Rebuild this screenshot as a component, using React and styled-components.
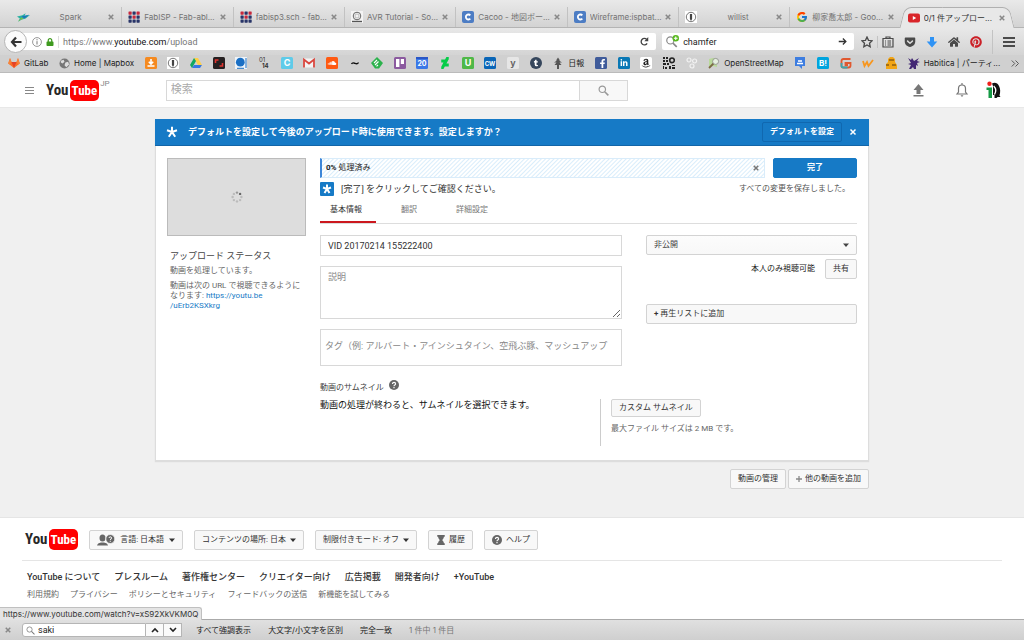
import React from "react";
import styled, { createGlobalStyle, css } from "styled-components";
import { FaGetPocket, FaPinterest, FaSoundcloud, FaAmazon, FaHome, FaTumblr, FaFacebookF, FaDeviantart, FaLinkedinIn, FaLock } from "react-icons/fa";
import { FcGoogle } from "react-icons/fc";

const Global = createGlobalStyle`
  * { box-sizing: border-box; }
  body { margin: 0; background: #f0f0f0; font: 8px/12px Roboto, "Noto Sans CJK JP", sans-serif; color: #555; }
  button, input, select, textarea { font: inherit; color: inherit; margin: 0; }
  button { cursor: pointer; padding: 0; white-space: nowrap; }
  a { color: inherit; text-decoration: none; white-space: nowrap; }
  svg { display: block; flex: none; }
`;

const Page = styled.div`display: flex; flex-direction: column; min-height: 100vh;`;

/* ---------- browser chrome ---------- */
const Chrome = styled.header`font-family: Inter, "Noto Sans CJK JP", sans-serif; color: #222;`;
const TabBar = styled.div`
  display: flex; align-items: flex-end; height: 28px; padding: 0 11px;
  background: linear-gradient(#e9e9e9, #d3d3d3); border-bottom: 1px solid #b4b4b4;
`;
const TabItem = styled.div`
  position: relative; flex: 1 1 0; min-width: 0; display: flex; align-items: center; gap: 4px;
  height: 20px; padding: 0 7px 0 6px; color: ${(p) => (p.$active ? "#333" : "#737373")};
  border-right: 1px solid ${(p) => (p.$active || p.$last ? "transparent" : "#c2c2c2")};
  ${(p) => p.$active && css`
    margin-bottom: -1px; height: 21px; z-index: 0;
    &::before, &::after {
      content: ""; position: absolute; z-index: -1; top: 0; bottom: 0; width: 60%;
      background: #e8e8e8; border: 1px solid #b0b0b0; border-bottom: 0;
    }
    &::before { left: 0; border-right: 0; border-radius: 7px 0 0 0; transform: skewX(-14deg); }
    &::after { right: 0; border-left: 0; border-radius: 0 7px 0 0; transform: skewX(14deg); }
  `}
`;
const TabLabel = styled.span`
  flex: 1; min-width: 0; margin-right: -3px; overflow: hidden; white-space: nowrap; font-size: 8px;
  text-align: ${(p) => (p.$center ? "center" : "left")};
`;
const IconButton = styled.button`
  display: flex; align-items: center; justify-content: center; border: 0; background: none; color: ${(p) => p.$color || "inherit"};
`;
const NavBar = styled.div`
  display: flex; align-items: center; gap: 6px; height: 27px; padding: 0 9px 0 4px;
  background: linear-gradient(#e8e8e8, #d4d4d4);
`;
const BackButton = styled(IconButton)`
  width: 23px; height: 23px; border-radius: 50%; background: #fbfbfb; border: 1px solid #b5b5b5; z-index: 1; flex: none;
  margin-right: -16px;
`;
const Field = styled.form`
  display: flex; align-items: center; gap: 4px; height: 17px; background: #fff; border-radius: 2px; padding: 0 7px 0 ${(p) => p.$inset || 4}px;
  flex: ${(p) => p.$grow || 1} 1 0; min-width: 0; font-family: Roboto, sans-serif;
`;
const Address = styled.label`
  flex: 1; border-left: 1px solid #ddd; padding-left: 4px; color: #777; font-size: 9px;
  b { font-weight: 400; color: #111; }
`;
const BareInput = styled.input`
  flex: 1; min-width: 0; border: 0; outline: 0; background: none; padding: 0; font-size: 9px;
`;
const Tools = styled.div`display: flex; align-items: center; gap: 10px; padding-left: 1px; color: #4a4a4a;`;
const Rule = styled.i`width: 1px; height: ${(p) => p.$h || 12}px; background: #c3c3c3; margin: 0 ${(p) => (p.$wide ? 0 : -6)}px;`;
const Bookmarks = styled.nav`
  display: flex; align-items: center; justify-content: space-between; height: 18px; padding: 0 4px 1px 8px;
  background: #d0d0d0; border-bottom: 1px solid #bbb; font-size: 8px;
`;
const Bookmark = styled.a`display: flex; align-items: center; gap: 4px; color: #222;`;

/* ---------- YouTube masthead ---------- */
const Masthead = styled.div`
  display: flex; align-items: center; height: 35px; padding: 0 20px 0 25px; background: #fff; border-bottom: 1px solid #e8e8e8;
`;
const MastLogo = styled.div`display: flex; align-items: center; margin-left: 12px;`;
const Logo = styled.a`
  display: flex; align-items: center; height: 21px; font: 700 15px/21px "Roboto Condensed", "Liberation Sans Narrow", "Liberation Sans", sans-serif; color: #282828;
`;
const LogoBox = styled.span`
  height: 21px; margin-left: 1px; padding: 0 2px; border-radius: 5px; background: #f00; color: #fff; font-size: 13px;
`;
const Region = styled.sup`align-self: flex-start; margin: -2px 0 0 1px; font: 8px/12px Roboto, sans-serif; color: #888;`;
const SearchForm = styled.form`display: flex; flex: 0 1 462px; height: 21px; margin-left: 56px;`;
const SearchInput = styled.input`
  flex: 1; min-width: 0; border: 1px solid #d8d8d8; padding: 0 4px; font-size: 11px; outline: 0;
  &::placeholder { color: #aaa; }
`;
const SearchButton = styled(IconButton)`width: 48px; border: 1px solid #d8d8d8; border-left: 0; background: #f8f8f8; color: #999;`;
const Account = styled.div`display: flex; align-items: center; margin-left: auto;`;
const AccountButton = styled(IconButton)`width: ${(p) => p.$w}px; color: #777;`;

/* ---------- upload card ---------- */
const Main = styled.main`flex: 1; width: 100%; max-width: 714px; margin: 0 auto; padding: 11px 0 28px;`;
const Card = styled.section`background: #fff; border: 1px solid #ddd; border-top: 0; box-shadow: 0 1px 1px #ddd;`;
const Notice = styled.div`
  display: flex; align-items: center; height: 27px; margin: 0 -1px; padding: 0 10px 0 11px; background: #167ac6; border-bottom: 1px solid #1265a8; color: #fff;
  h1 { flex: 1; margin: 0 0 0 10px; font-size: 9px; font-weight: 700; }
`;
const NoticeButton = styled.button`
  height: 20px; padding: 0 7px; margin-right: 5px; background: #167ac6; border: 1px solid #1068b0; border-radius: 2px; font-weight: 700; color: #fff;
`;
const Columns = styled.div`display: grid; grid-template-columns: 139px minmax(0, 1fr); gap: 14px; padding: 12px 11px 14px;`;
const Thumb = styled.div`
  display: flex; align-items: center; justify-content: center; height: 78px; background: #ddd; border: 1px solid #bbb;
`;
const Status = styled.div`
  padding: 14px 3px 0; color: #666; line-height: 10px;
  h2 { margin: 0 0 4px; font-size: 9px; line-height: 12px; font-weight: 400; color: #444; }
  p { margin: 0 0 5px; }
  a { color: #167ac6; white-space: normal; }
`;
const Split = styled.div`display: flex; align-items: center; gap: 8px;`;
const Progress = styled.div`
  flex: 1; display: flex; align-items: center; justify-content: space-between; height: 20px; padding: 0 5px 0 4px;
  border: 1px solid #d9ecfa; border-left: 2px solid #3d86d8; color: #222;
  background: repeating-linear-gradient(135deg, #fff 0 1px, #d9edfb 2px, #fff 3px);
`;
const Primary = styled.button`width: 84px; height: 20px; border: 1px solid #167ac6; border-radius: 2px; background: #167ac6; color: #fff; font-weight: 700;`;
const Confirm = styled(Split)`
  height: 21px; gap: 7px; font-size: 9px; color: #333;
  small { margin-left: auto; padding-right: 7px; font-size: 8px; color: #555; }
`;
const Tabs = styled.nav`display: flex; gap: 15px; height: 25px; border-bottom: 1px solid #ddd;`;
const SectionTab = styled.a`
  display: flex; align-items: center; height: 24px; padding: 0 14px 0 10px; color: ${(p) => (p.$on ? "#333" : "#777")};
  border-bottom: 2px solid ${(p) => (p.$on ? "#cc181e" : "transparent")};
`;
const FormGrid = styled.div`display: grid; grid-template-columns: minmax(0, 302fr) minmax(0, 211fr); gap: 24px; padding-top: 11px;`;
const Stack = styled.div`display: flex; flex-direction: column; gap: 10px;`;
const fieldLook = css`width: 100%; border: 1px solid #d8d8d8; background: #fff; outline: 0; display: block; &::placeholder { color: #888; opacity: 1; }`;
const TitleInput = styled.input`${fieldLook} height: 21px; padding: 0 7px; font-size: 9px; color: #333;`;
const Description = styled.textarea`${fieldLook} height: 53px; padding: 4px 7px; font-size: 9px; line-height: 12px; resize: vertical;`;
const TagsInput = styled.input`${fieldLook} height: 37px; padding: 0 11px 4px 4px; font-size: 9px;`;
const SelectWrap = styled.div`
  position: relative; color: #444;
  svg { position: absolute; right: 8px; top: 7px; pointer-events: none; }
`;
const Select = styled.select`
  appearance: none; width: 100%; height: 20px; padding: 0 7px; border: 1px solid #d3d3d3; border-radius: 2px;
  background: linear-gradient(#fcfcfc, #f8f8f8);
`;
const Button = styled.button`
  display: inline-flex; align-items: center; gap: ${(p) => p.$gap || 4}px; height: ${(p) => p.$h || 20}px; padding: 0 7px;
  border: 1px solid #d3d3d3; border-radius: 2px; background: #f8f8f8; color: #333;
`;
const PlaylistButton = styled(Button)`width: 100%; gap: 2px;`;
const Share = styled.div`display: flex; align-items: center; justify-content: flex-end; gap: 10px; margin: 4px 0 25px; color: #222;`;
const ThumbRow = styled.div`display: grid; grid-template-columns: 280px minmax(0, 1fr); color: #222;`;
const ThumbTitle = styled.h3`
  display: flex; gap: 5px; margin: 14px 0 4px; font-size: 8px; line-height: 14px; font-weight: 400; color: #444;
  span { padding-top: 1px; }
`;
const ThumbNote = styled.p`margin: 0; font-size: 9px; color: #111;`;
const ThumbUpload = styled.div`
  min-height: 47px; border-left: 1px solid #ccc; padding-left: 10px; color: #666;
  p { margin: 6px 0 0; }
`;
const CardActions = styled.div`display: flex; justify-content: flex-end; gap: 2px; padding-top: 8px;`;

/* ---------- footer ---------- */
const Footer = styled.footer`min-height: 102px; padding: 11px 22px 0; background: #fff; border-top: 1px solid #e5e5e5;`;
const FooterTop = styled.div`display: flex; align-items: center; gap: 11px; padding: 0 0 10px 3px; border-bottom: 1px solid #e5e5e5;`;
const Links = styled.nav`
  display: flex; gap: ${(p) => (p.$small ? 11 : 14)}px; padding: ${(p) => (p.$small ? 6 : 10)}px 5px 0; font-size: ${(p) => (p.$small ? 8 : 9)}px; color: ${(p) => (p.$small ? "#666" : "#333")};
  font-weight: ${(p) => (p.$small ? 400 : 500)};
`;
const FindBar = styled.form`
  position: relative; display: flex; align-items: center; height: 21px; padding: 0 5px; color: #222;
  background: linear-gradient(#e0e0e0, #cfcfcf); border-top: 1px solid #aaa; font-family: Inter, "Noto Sans CJK JP", sans-serif;
`;
const StatusTip = styled.div`
  position: absolute; left: 0; bottom: 100%; padding: 0 3px; height: 13px; font-size: 8px; line-height: 12px; color: #333;
  background: #e4e4e4; border: 1px solid #c0c0c0; border-left: 0; border-bottom: 0; border-radius: 0 3px 0 0;
`;
const FindBox = styled.label`
  display: flex; align-items: center; gap: 3px; width: 124px; height: 14px; margin-left: 11px; padding: 0 3px; background: #fff; border: 1px solid #b5b5b5; border-radius: 3px 0 0 3px;
  font-family: Roboto, sans-serif; color: #222;
  svg { color: #777; }
`;
const FindStep = styled(IconButton)`width: 18px; height: 14px; background: #fafafa; border: 1px solid #b5b5b5; border-left: 0;`;
const FindOptions = styled.div`
  display: flex; gap: 17px; margin-left: 14px;
  button { border: 0; background: none; }
  output { color: #777; }
`;

/* ---------- icons ---------- */
const Svg = ({ s = 12, children, v = 12, ...p }) => (
  <svg width={s} height={s} viewBox={`0 0 ${v} ${v}`} fill="none" aria-hidden="true" {...p}>{children}</svg>
);
const Cross = ({ s = 6, w = 2 }) => <Svg s={s} v={8}><path d="M1 1l6 6M7 1L1 7" stroke="currentColor" strokeWidth={w} /></Svg>;
const Caret = () => <Svg s={6} v={6}><path d="M0 1.500h6L3 5z" fill="currentColor" /></Svg>;
const Lens = ({ s = 10, w = 1.3 }) => <Svg s={s}><circle cx="4.7" cy="4.7" r="3.5" stroke="currentColor" strokeWidth={w} /><path d="M7.3 7.3l4 4" stroke="currentColor" strokeWidth={w + 0.4} /></Svg>;
const Help = ({ s = 10 }) => <Svg s={s}><circle cx="6" cy="6" r="6" fill="#666" /><path d="M4.2 4.7c0-2.4 3.7-2.3 3.7 0 0 1.4-1.9 1.3-1.9 2.7M6 8.4v1.4" stroke="#fff" strokeWidth="1.4" /></Svg>;
const Star6 = ({ s = 12 }) => <Svg s={s}><path d="M6 6V.8M6 6L1 4.3M6 6l5-1.7M6 6l-3.2 4.8M6 6l3.2 4.8" stroke="#fff" strokeWidth="2" /></Svg>;
const Box = ({ bg, fg = "#fff", children, t, size = 9, r = 1.5 }) => (
  <Svg><rect width="12" height="12" rx={r} fill={bg} />{children}{t && <text x="6" y="9" fontSize={size} fontWeight="700" textAnchor="middle" fill={fg} fontFamily="Inter, sans-serif">{t}</text>}</Svg>
);
const Grid = () => (
  <Svg>{[0, 1, 2].map((y) => [0, 1, 2].map((x) => <rect key={`${x}${y}`} x={x * 4 + 0.5} y={y * 4 + 0.5} width="3.2" height="3.2" rx=".6" fill={x + y === 2 && x !== 0 ? "#c8283c" : x === 0 && y === 0 ? "#c8283c" : "#283468"} />))}</Svg>
);
const Spark = () => <Svg s={13}><path d="M0 5l5-1 3-2-1 2.6 5-1-4 3.4-4 1-3 2 1.6-3z" fill="#2bb1a3" /><path d="M4 5l7-1.6L7 7z" fill="#1b75bc" /><path d="M1 9.6L4 6l2 .6z" fill="#7ac043" /></Svg>;
const Pen = () => <Svg><rect width="12" height="12" fill="#fff" /><circle cx="6" cy="6" r="4.7" stroke="#555" strokeWidth=".8" /><path d="M4.9 3h2.2v5L6 10 4.9 8z" fill="#444" /></Svg>;
const SparkFun = () => <Svg><rect width="12" height="12" fill="#f4f4f4" /><circle cx="6" cy="5" r="3.8" stroke="#666" /><circle cx="6" cy="5" r="2" stroke="#999" strokeWidth=".6" /><path d="M1 10.5h10" stroke="#555" strokeWidth="1.4" /></Svg>;
const Cacoo = () => <Box bg="#4d7dc4" r={2}><path d="M8.3 4.4A2.5 2.5 0 1 0 8.3 7.6" stroke="#fff" strokeWidth="1.8" /></Box>;
const YTPlay = () => <Svg><rect y="1.5" width="12" height="9" rx="2" fill="#d9252a" /><path d="M4.8 4v4L8.2 6z" fill="#fff" /></Svg>;
const Globe = () => <Svg s={11}><circle cx="6" cy="6" r="5.5" fill="#777" /><path d="M2 3l3-1 1 2-2 2-2-1zM7 5l3-1 1 3-3 3-2-2z" fill="#ddd" /></Svg>;
const GitLab = () => <Svg><path d="M2 1l1.500 4h5L10 1l1.800 5.500L6 11 .2 6.500z" fill="#fc6d26" /><path d="M3.500 5h5L6 11z" fill="#e24329" /><path d="M2 1L.2 6.500 1.500 7.500 3.500 5zM10 1l1.800 5.500-1.300 1L8.500 5z" fill="#f5853a" /></Svg>;

const marks = [
  [<Box bg="#f58a20"><path d="M6 2v4M3.8 4.8L6 7l2.2-2.2M2.5 9h7" stroke="#fff" strokeWidth="1.6" /></Box>, "ダウンロード"],
  [<Pen />, "Pen"],
  [<Svg><path d="M4 1h4l4 7H8z" fill="#ffcf48" /><path d="M4 1L0 8l2 3 4-7z" fill="#11a861" /><path d="M4 8h8l-2 3H2z" fill="#3777e3" /></Svg>, "Drive"],
  [<Box bg="#252021"><path d="M2.5 6V3h3M9.5 6v3h-3" stroke="#e0342f" strokeWidth="1.6" /></Box>, "Frame"],
  [<Svg><rect width="12" height="12" fill="#eef4fa" /><circle cx="5.3" cy="5.2" r="4.4" fill="#1a6fc4" /><path d="M2 11.3h7M11 1v10" stroke="#1a6fc4" /></Svg>, "Q"],
  [<Svg><g fill="#333" fontSize="6" fontFamily="Inter, sans-serif"><text x="1" y="5">01</text><text x="4" y="11" fontWeight="700">14</text></g></Svg>, "0114"],
  [<Box bg="#5fcbe9" t="C" />, "C"],
  [<Svg><rect y="1.5" width="12" height="9" rx="1" fill="#f3f3f3" /><path d="M1 10.5V2.5l5 4 5-4v8" stroke="#d9453d" strokeWidth="1.8" /></Svg>, "Gmail"],
  [<Box bg="#ff5a12"><FaSoundcloud x="1.5" y="1.5" size={9} color="#fff" /></Box>, "SoundCloud"],
  [<Svg><path d="M2.500 7c1-2 2.500-1 3.500-.6S8.500 7.400 9.500 5.500" stroke="#111" strokeWidth="1.400" /></Svg>, "Tilde"],
  [<Svg><path d="M6 0l6 6-4 5.400H4L0 6z" fill="#2bb24c" /><path d="M3 6l3-3M4 8l3.500-3.500M5.500 9.300L7 8" stroke="#fff" strokeWidth="1.1" /></Svg>, "Feedly"],
  [<Box bg="#8b5a9f"><path d="M2 2h3.400v8H2zM6.800 2H10v5H6.800z" fill="#fff" /></Box>, "Trello"],
  [<Box bg="#3b78e7" t="20" size={7}><path d="M0 0h12v2H0z" fill="#2a56c6" /></Box>, "Calendar"],
  [<FaDeviantart size={12} color="#05cc47" />, "DeviantArt"],
  [<Box bg="#4fb848" t="U" />, "U"],
  [<Box bg="#0a66b7" t="CW" size={6} />, "CW"],
  [<Box bg="#e6e6e6" fg="#666" t="y" />, "y"],
  [<Svg><circle cx="6" cy="6" r="6" fill="#35465c" /><FaTumblr x="2.500" y="2.500" size={7} color="#fff" /></Svg>, "Tumblr"],
  [<Svg><path d="M6 .5l2 3H7l3 2H7.500L9.500 8H7v4H5V8H2.500l2-2.500H2l3-2H4z" fill="#555" /></Svg>, "日報", true],
  [<Box bg="#3f5b9a"><FaFacebookF x="3" y="2" size={9} color="#fff" /></Box>, "Facebook"],
  [<Box bg="#0a78b5"><FaLinkedinIn x="2" y="2" size={8} color="#fff" /></Box>, "LinkedIn"],
  [<Box bg="#fff"><FaAmazon x="1" y="1" size={10} color="#222" /></Box>, "Amazon"],
  [<Svg><path d="M0 0h2v2H0zM3 0h2v2H3zM0 3h2v2H0zM3 3h2v2H3zM0 6h3v2H0zM4 6h2v2H4zM0 9h1v3H0zM2 10h2v2H2zM6 9h2v3H6zM9 8h3v1H9zM9 10h3v2H9z" fill="#222" /><circle cx="9" cy="3.300" r="2.300" stroke="#222" strokeWidth="1.600" /></Svg>, "QR"],
  [<Svg stroke="#f2f2f2" strokeWidth="1.200"><circle cx="3" cy="3" r="2" /><circle cx="8.600" cy="4" r="2" /><circle cx="6" cy="9" r="2" /></Svg>, "Rings"],
  [<Svg><path d="M1 2l4-1 4 1v8l-4-1-4 1z" fill="#b9d99a" /><path d="M1 11l5-5" stroke="#7c6a45" strokeWidth="1.800" /><circle cx="7.600" cy="4.400" r="3" fill="#e6efe0" stroke="#888" strokeWidth=".8" /></Svg>, "OpenStreetMap", true],
  [<Svg><path d="M1 0h10v9H8v3L5 9H1z" fill="#3d7de0" /><path d="M3 6.500h6M4 4h4" stroke="#fff" strokeWidth="1.300" /></Svg>, "Translate"],
  [<Box bg="#00a4de" t="B!" size={8} />, "B!"],
  [<Svg><path d="M10.500 2H3.500Q1.500 2 1.500 4v5q0 1.500 2 1.500h5q2 0 2-2V6H5.500v2H8" stroke="#e0582f" strokeWidth="1.800" /><path d="M1.500 6v3q0 1.500 2 1.500h4" stroke="#3aa6b0" strokeWidth="1.800" /></Svg>, "G"],
  [<Svg><path d="M1 4l1.500 5L5 5l1.500 4L11 3" stroke="#f7961e" strokeWidth="1.800" /></Svg>, "w"],
  [<Svg><path d="M1 12V7l2-2V2l2-2h3l2 2v3l2 3v4z" fill="#f2a516" /><path d="M4 3h5M1 8h3M7 8h4" stroke="#5a3a10" strokeWidth="1.200" /></Svg>, "Character"],
  [<Svg><path d="M0 1l3 2 1-2 2 3 5-3-2 3 3 1-3 1 1 3-2-1v4H6l-1-2-2 2H1l2-4-3-1 3-1z" fill="#432874" /></Svg>, "Habitica | パーティ...", true],
];

const tabs = [
  [<Spark />, "Spark", true],
  [<Grid />, "FabISP - Fab-abl..."],
  [<Grid />, "fabisp3.sch - fab..."],
  [<SparkFun />, "AVR Tutorial - So..."],
  [<Cacoo />, "Cacoo - 地図ボー..."],
  [<Cacoo />, "Wireframe:ispbat..."],
  [<Pen />, "willist", true],
  [<FcGoogle size={12} />, "柳家喬太郎 - Goo..."],
  [<YTPlay />, "0/1 件アップロー..."],
];

const YouTubeLogo = () => <Logo href="#" aria-label="YouTube">You<LogoBox>Tube</LogoBox></Logo>;

function BrowserChrome() {
  return (
    <Chrome>
      <TabBar>
        {tabs.map(([icon, name, center], i) => (
          <TabItem key={i} $active={i === 8} $last={i === 7}>
            {icon}<TabLabel $center={center}>{name}</TabLabel>
            <IconButton aria-label="タブを閉じる" $color="#888"><Cross /></IconButton>
          </TabItem>
        ))}
      </TabBar>
      <NavBar>
        <BackButton aria-label="戻る" $color="#333"><Svg><path d="M6 1.500L2 6l4 4.500M2 6h9.500" stroke="currentColor" strokeWidth="2.200" /></Svg></BackButton>
        <Field $inset={15} $grow={645} onSubmit={(e) => e.preventDefault()}>
          <Svg s={10}><circle cx="6" cy="6" r="5.300" stroke="#777" strokeWidth=".9" /><path d="M6 5v4M6 2.600V4" stroke="#777" strokeWidth="1.200" /></Svg>
          <FaLock size={8} color="#3f9a1f" />
          <Address>https://www.<b>youtube.com</b>/upload</Address>
          <IconButton aria-label="再読み込み" $color="#444"><Svg s={9}><path d="M9.500 8.500A4.300 4.300 0 1 1 9 3.300" stroke="currentColor" strokeWidth="1.800" /><path d="M11 0v5.500H5.800z" fill="currentColor" /></Svg></IconButton>
        </Field>
        <Field $grow={189}>
          <Svg s={13}><circle cx="4" cy="5" r="3.300" stroke="#888" strokeWidth="1.100" /><path d="M6.400 7.500l3.500 3.500" stroke="#888" strokeWidth="1.500" /><circle cx="9" cy="3" r="3" fill="#58b91e" /><path d="M9 1.300v3.400M7.300 3h3.400" stroke="#fff" /></Svg>
          <BareInput aria-label="検索" defaultValue="chamfer" />
          <IconButton aria-label="検索する"><Svg s={9}><path d="M1 6h9M6.500 2l4 4-4 4" stroke="#333" strokeWidth="1.700" /></Svg></IconButton>
        </Field>
        <Tools>
          <IconButton aria-label="ブックマーク"><Svg><path d="M6 1l1.500 3.300 3.700.4-2.700 2.500.7 3.600L6 9l-3.200 1.800.7-3.600L.8 4.700l3.700-.4z" stroke="currentColor" strokeWidth="1.300" /></Svg></IconButton>
          <Rule />
          <IconButton aria-label="一覧"><Svg><path d="M1 2.500h10v8.500H1zM4 2.500v-1.500h4v1.500M3 5h1M5.500 5H9M3 7h1M5.500 7H9M3 9h1M5.500 9H9" stroke="currentColor" strokeWidth="1.200" /></Svg></IconButton>
          <IconButton aria-label="Pocket"><FaGetPocket size={12} /></IconButton>
          <IconButton aria-label="ダウンロード" $color="#2f93f5"><Svg><path d="M4 1h4v4.500h3.300L6 11.500.7 5.500H4z" fill="currentColor" /></Svg></IconButton>
          <IconButton aria-label="ホーム"><FaHome size={12} /></IconButton>
          <IconButton aria-label="Pinterest" $color="#cb2027"><FaPinterest size={12} /></IconButton>
          <Rule $h={24} $wide />
          <IconButton aria-label="メニュー"><Svg><path d="M0 2h12M0 6h12M0 10h12" stroke="currentColor" strokeWidth="2" /></Svg></IconButton>
        </Tools>
      </NavBar>
      <Bookmarks>
        <Bookmark href="#"><GitLab />GitLab</Bookmark>
        <Bookmark href="#"><Globe />Home | Mapbox</Bookmark>
        {marks.map(([icon, name, show]) => <Bookmark key={name} href="#" aria-label={name}>{icon}{show && name}</Bookmark>)}
        <IconButton aria-label="その他"><Svg s={9}><path d="M1 2l4 4-4 4M6 2l4 4-4 4" stroke="#555" strokeWidth="1.300" /></Svg></IconButton>
      </Bookmarks>
    </Chrome>
  );
}

const Spinner = () => (
  <Svg>{[...Array(8)].map((_, i) => <circle key={i} cx={6 + 4.4 * Math.cos(i * 0.785)} cy={6 + 4.4 * Math.sin(i * 0.785)} r="1.200" fill={i === 7 ? "#666" : i === 6 ? "#999" : "#bbb"} />)}</Svg>
);

export default function App() {
  return (
    <Page lang="ja">
      <Global />
      <BrowserChrome />
      <Masthead>
        <IconButton aria-label="ガイド" $color="#888"><Svg s={9} v={9}><path d="M0 1.500h9M0 4.500h9M0 7.500h9" stroke="currentColor" /></Svg></IconButton>
        <MastLogo><YouTubeLogo /><Region>JP</Region></MastLogo>
        <SearchForm onSubmit={(e) => e.preventDefault()}>
          <SearchInput aria-label="検索" placeholder="検索" />
          <SearchButton aria-label="検索する"><Lens s={11} /></SearchButton>
        </SearchForm>
        <Account>
          <AccountButton $w={43} aria-label="アップロード"><Svg s={27} v={27}><path d="M13.500 7l5 6h-3v4h-4v-4h-3zM8.500 18h10v1.500h-10z" fill="currentColor" /></Svg></AccountButton>
          <AccountButton $w={43} aria-label="通知"><Svg s={14} v={14}><path d="M2 11h10L10.500 9V5.500a3.500 3.500 0 0 0-7 0V9zM7 1.500V0" stroke="currentColor" strokeWidth="1.200" /><path d="M5.500 12.300h3L7 14z" fill="currentColor" /></Svg></AccountButton>
          <AccountButton $w={21} aria-label="アカウント">
            <Svg s={18} v={18}><path d="M7 2.500c3-1.500 5.500-.5 7 2.500 1.500 3 1.500 6 .5 9.500l1 1.500h-3l-1 1H9.500V14H8V5z" fill="#111" /><path d="M1.500 6.500H7V17H3.500V9h-2z" fill="#159a45" /><path d="M8.700 5c2.500 2.500 2.300 6 .8 8.500" stroke="#fff" strokeWidth="1.300" /><circle cx="4.500" cy="2.800" r="2.200" fill="#f0201c" /></Svg>
          </AccountButton>
        </Account>
      </Masthead>

      <Main>
        <Card>
          <Notice>
            <Star6 />
            <h1>デフォルトを設定して今後のアップロード時に使用できます。設定しますか？</h1>
            <NoticeButton>デフォルトを設定</NoticeButton>
            <IconButton aria-label="閉じる"><Svg s={12}><path d="M3.500 3.500l5 5M8.500 3.500l-5 5" stroke="#fff" strokeWidth="1.500" /></Svg></IconButton>
          </Notice>
          <Columns>
            <aside>
              <Thumb><Spinner /></Thumb>
              <Status>
                <h2>アップロード ステータス</h2>
                <p>動画を処理しています。</p>
                <p>動画は次の URL で視聴できるようになります: <a href="#">https://youtu.be<wbr />/uErb2KSXkrg</a></p>
              </Status>
            </aside>
            <div>
              <Split>
                <Progress><span><b>0%</b> 処理済み</span><IconButton aria-label="キャンセル" $color="#777"><Cross s={6} /></IconButton></Progress>
                <Primary>完了</Primary>
              </Split>
              <Confirm>
                <Svg s={14} v={14}><rect width="14" height="14" rx="1" fill="#167ac6" /><path d="M7 7V2.500M7 7L3 5.500M7 7l4-1.500M7 7l-2.500 4M7 7l2.500 4" stroke="#fff" strokeWidth="2" /></Svg>
                <span>[完了] をクリックしてご確認ください。</span>
                <small>すべての変更を保存しました。</small>
              </Confirm>
              <Tabs>
                <SectionTab href="#" $on>基本情報</SectionTab>
                <SectionTab href="#">翻訳</SectionTab>
                <SectionTab href="#">詳細設定</SectionTab>
              </Tabs>
              <FormGrid>
                <Stack>
                  <TitleInput aria-label="タイトル" defaultValue="VID 20170214 155222400" />
                  <Description aria-label="説明" placeholder="説明" />
                  <TagsInput aria-label="タグ" placeholder="タグ（例: アルバート・アインシュタイン、空飛ぶ豚、マッシュアップ" />
                </Stack>
                <div>
                  <SelectWrap>
                    <Select aria-label="公開設定"><option>非公開</option></Select><Caret />
                  </SelectWrap>
                  <Share>本人のみ視聴可能<Button>共有</Button></Share>
                  <PlaylistButton><b>+</b>再生リストに追加</PlaylistButton>
                </div>
              </FormGrid>
              <ThumbTitle><span>動画のサムネイル</span><Help /></ThumbTitle>
              <ThumbRow>
                <ThumbNote>動画の処理が終わると、サムネイルを選択できます。</ThumbNote>
                <ThumbUpload>
                  <Button $h={18}>カスタム サムネイル</Button>
                  <p>最大ファイル サイズは 2 MB です。</p>
                </ThumbUpload>
              </ThumbRow>
            </div>
          </Columns>
        </Card>
        <CardActions>
          <Button>動画の管理</Button>
          <Button $gap={3}><Svg s={6} v={7}><path d="M3.500 0v7M0 3.500h7" stroke="#888" strokeWidth="1.500" /></Svg>他の動画を追加</Button>
        </CardActions>
      </Main>

      <Footer>
        <FooterTop>
          <YouTubeLogo />
          <Button $gap={5}>
            <svg width="18" height="12" viewBox="0 0 18 12" fill="none" aria-hidden="true"><ellipse cx="5.500" cy="4" rx="3" ry="3.500" fill="#666" /><path d="M0 11.500q.5-2.500 4-3h3q3.500.5 4 3z" fill="#666" /><circle cx="13.300" cy="5" r="4.500" fill="#666" stroke="#f8f8f8" strokeWidth=".8" /><path d="M12 4c0-1.600 2.600-1.500 2.600 0 0 1-1.300 1-1.300 2M13.300 6.800v1" stroke="#fff" strokeWidth="1" /></svg>
            <span>言語: 日本語</span><Caret />
          </Button>
          <Button><span>コンテンツの場所: 日本</span><Caret /></Button>
          <Button><span>制限付きモード: オフ</span><Caret /></Button>
          <Button $gap={3}><Svg s={10}><path d="M1.500 0h9v2h-1c0 2-1.500 3-2 4 .5 1 2 2 2 4h1v2h-9v-2h1c0-2 1.500-3 2-4-.5-1-2-2-2-4h-1z" fill="#666" /></Svg>履歴</Button>
          <Button><Help />ヘルプ</Button>
        </FooterTop>
        <Links>
          {["YouTube について", "プレスルーム", "著作権センター", "クリエイター向け", "広告掲載", "開発者向け", "+YouTube"].map((t) => <a href="#" key={t}>{t}</a>)}
        </Links>
        <Links $small>
          {["利用規約", "プライバシー", "ポリシーとセキュリティ", "フィードバックの送信", "新機能を試してみる"].map((t) => <a href="#" key={t}>{t}</a>)}
        </Links>
      </Footer>
      <FindBar onSubmit={(e) => e.preventDefault()}>
        <StatusTip>https://www.youtube.com/watch?v=xS92XkVKM0Q</StatusTip>
        <IconButton type="button" aria-label="検索バーを閉じる" $color="#888"><Cross /></IconButton>
        <FindBox><Lens s={9} w={1} /><BareInput aria-label="ページ内検索" defaultValue="saki" /></FindBox>
        <FindStep type="button" aria-label="前を検索"><Svg s={8} v={8}><path d="M1 6l3-3 3 3" stroke="#222" strokeWidth="1.600" /></Svg></FindStep>
        <FindStep type="button" aria-label="次を検索"><Svg s={8} v={8}><path d="M1 2l3 3 3-3" stroke="#222" strokeWidth="1.600" /></Svg></FindStep>
        <FindOptions>
          <button type="button">すべて強調表示</button>
          <button type="button">大文字/小文字を区別</button>
          <button type="button">完全一致</button>
          <output>1 件中 1 件目</output>
        </FindOptions>
      </FindBar>
    </Page>
  );
}
